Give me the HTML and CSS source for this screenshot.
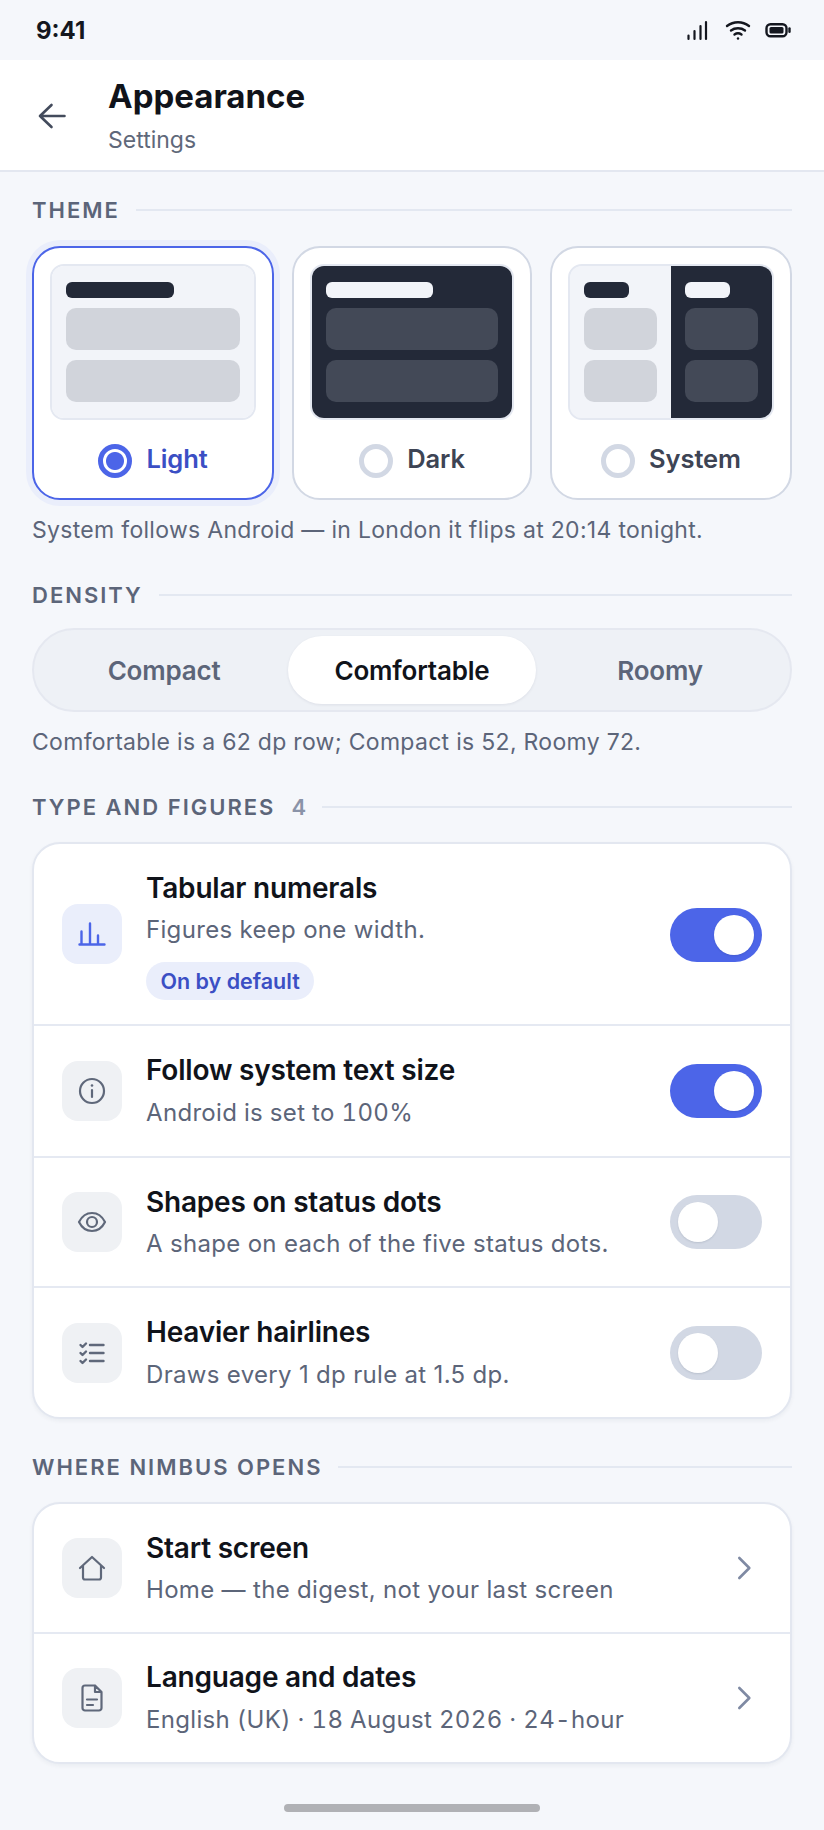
FILE: index.html
```html
<!DOCTYPE html>
<html lang="en">
<head>
    <meta charset="UTF-8">
    <meta name="viewport" content="width=device-width, initial-scale=1.0">
    <title>Appearance</title>
    <link rel="stylesheet" href="styles.css">
</head>
<body>
    <div class="status-bar">
        <span class="clock">9:41</span>
        <div class="status-icons">
            <svg class="signal" width="24" height="24" viewBox="0 0 24 24" fill="none" stroke="#14171f" stroke-width="2.200" stroke-linecap="round"><path d="M3.500 21v-3.500M9.500 21v-8M15.500 21V8M21 21V4"/></svg>
            <svg class="wifi" width="28" height="24" viewBox="0 0 28 24" fill="none" stroke="#14171f" stroke-width="2.400" stroke-linecap="round"><path d="M3 8c6.500-5 15.500-5 22 0M7 12.500c4-3 10-3 14 0M10.500 16.500c2-1.400 5-1.400 7 0"/><circle cx="14" cy="20.500" r="1.200" fill="#14171f" stroke="none"/></svg>
            <svg width="26" height="24" viewBox="0 0 26 24" fill="none"><rect x="1.500" y="6.200" width="20" height="12" rx="4" stroke="#14171f" stroke-width="2.400"/><rect x="4.500" y="9" width="14" height="6.400" rx="1.500" fill="#14171f"/><path d="M24.500 10.500v3.200" stroke="#14171f" stroke-width="2.400" stroke-linecap="round"/></svg>
        </div>
    </div>

    <header class="app-bar">
        <svg class="back" width="32" height="32" viewBox="0 0 32 32" fill="none" stroke="#434b5c" stroke-width="2.600" stroke-linecap="round" stroke-linejoin="round"><path d="M28.500 16H4M15.500 5 4 16l11.500 11"/></svg>
        <div>
            <h1>Appearance</h1>
            <p>Settings</p>
        </div>
    </header>

    <main>
        <div class="section-head"><span>THEME</span></div>
        <div class="themes">
            <div class="theme selected">
                <div class="preview">
                    <div class="pane light"><i class="bar"></i><i class="block"></i><i class="block"></i></div>
                </div>
                <div class="theme-label"><span class="radio"></span><span class="name">Light</span></div>
            </div>
            <div class="theme">
                <div class="preview">
                    <div class="pane dark"><i class="bar"></i><i class="block"></i><i class="block"></i></div>
                </div>
                <div class="theme-label"><span class="radio"></span><span class="name">Dark</span></div>
            </div>
            <div class="theme">
                <div class="preview split">
                    <div class="pane light"><i class="bar"></i><i class="block"></i><i class="block"></i></div>
                    <div class="pane dark"><i class="bar"></i><i class="block"></i><i class="block"></i></div>
                </div>
                <div class="theme-label"><span class="radio"></span><span class="name">System</span></div>
            </div>
        </div>
        <p class="note">System follows Android — in London it flips at 20:14 tonight.</p>

        <div class="section-head density-head"><span>DENSITY</span></div>
        <div class="segments">
            <div class="segment">Compact</div>
            <div class="segment active">Comfortable</div>
            <div class="segment">Roomy</div>
        </div>
        <p class="note">Comfortable is a 62 dp row; Compact is 52, Roomy 72.</p>

        <div class="section-head type-head"><span>TYPE AND FIGURES</span><b>4</b></div>
        <div class="card">
            <div class="row tall">
                <div class="icon accent">
                    <svg width="32" height="32" viewBox="0 0 32 32" fill="none" stroke="#4c65e8" stroke-width="2.400" stroke-linecap="round"><path d="M3.500 26.500h25M5.500 26.500V13.500M14 26.500V5.500M22 26.500V17.500"/></svg>
                </div>
                <div class="text">
                    <div class="title">Tabular numerals</div>
                    <div class="sub">Figures keep one width.</div>
                    <div class="badge">On by default</div>
                </div>
                <div class="toggle on"></div>
            </div>
            <div class="row follow">
                <div class="icon">
                    <svg width="32" height="32" viewBox="0 0 32 32" fill="none" stroke="#5f687a" stroke-width="2.200" stroke-linecap="round"><circle cx="16" cy="16" r="12"/><path d="M16 15v7"/><circle cx="16" cy="10.500" r="1.300" fill="#5f687a" stroke="none"/></svg>
                </div>
                <div class="text">
                    <div class="title">Follow system text size</div>
                    <div class="sub tnum">Android is set to 100%</div>
                </div>
                <div class="toggle on"></div>
            </div>
            <div class="row">
                <div class="icon">
                    <svg width="32" height="32" viewBox="0 0 32 32" fill="none" stroke="#5f687a" stroke-width="2.200" stroke-linecap="round" stroke-linejoin="round"><path d="M3 16c3-6 8-9 13-9s10 3 13 9c-3 6-8 9-13 9S6 22 3 16z"/><circle cx="16" cy="16" r="5"/></svg>
                </div>
                <div class="text">
                    <div class="title">Shapes on status dots</div>
                    <div class="sub">A shape on each of the five status dots.</div>
                </div>
                <div class="toggle"></div>
            </div>
            <div class="row hairlines">
                <div class="icon">
                    <svg width="32" height="32" viewBox="0 0 32 32" fill="none" stroke="#5f687a" stroke-width="2.400" stroke-linecap="round" stroke-linejoin="round"><path d="M14 8h13.500M14 16h13.500M14 24h13.500M4.500 8l2 2 3.500-3.500M4.500 16l2 2 3.500-3.500M4.500 24l2 2 3.500-3.500"/></svg>
                </div>
                <div class="text">
                    <div class="title">Heavier hairlines</div>
                    <div class="sub">Draws every 1 dp rule at 1.5 dp.</div>
                </div>
                <div class="toggle"></div>
            </div>
        </div>

        <div class="section-head opens-head"><span>WHERE NIMBUS OPENS</span></div>
        <div class="card">
            <div class="row">
                <div class="icon">
                    <svg width="32" height="32" viewBox="0 0 32 32" fill="none" stroke="#5f687a" stroke-width="2.200" stroke-linecap="round" stroke-linejoin="round"><path d="M4 16 16 5l12 11M7 13.500v12a2 2 0 0 0 2 2h14a2 2 0 0 0 2-2v-12"/></svg>
                </div>
                <div class="text">
                    <div class="title">Start screen</div>
                    <div class="sub">Home — the digest, not your last screen</div>
                </div>
                <svg class="chevron" width="32" height="32" viewBox="0 0 32 32" fill="none" stroke="#7f8aa3" stroke-width="2.600" stroke-linecap="round" stroke-linejoin="round"><path d="M9.300 6l10 10-10 10"/></svg>
            </div>
            <div class="row">
                <div class="icon">
                    <svg width="32" height="32" viewBox="0 0 32 32" fill="none" stroke="#5f687a" stroke-width="2.200" stroke-linecap="round" stroke-linejoin="round"><path d="M19 3.500H9a2.500 2.500 0 0 0-2.500 2.500v20A2.500 2.500 0 0 0 9 28.500h14a2.500 2.500 0 0 0 2.500-2.500V10L19 3.500V10h6.500M11 17.500h10M11 23h6"/></svg>
                </div>
                <div class="text">
                    <div class="title">Language and dates</div>
                    <div class="sub tnum">English (UK) · 18 August 2026 · 24-hour</div>
                </div>
                <svg class="chevron" width="32" height="32" viewBox="0 0 32 32" fill="none" stroke="#7f8aa3" stroke-width="2.600" stroke-linecap="round" stroke-linejoin="round"><path d="M9.300 6l10 10-10 10"/></svg>
            </div>
        </div>
        <div class="home-indicator"></div>
    </main>
</body>
</html>
```

FILE: styles.css
```css
* {
    box-sizing: border-box;
}
body {
    margin: 0;
    font-family: Inter, "Liberation Sans", sans-serif;
    background-color: #f5f7fb;
    color: #10131a;
    height: 1830px;
    overflow: hidden;
}
p, h1 {
    margin: 0;
}

.status-bar {
    height: 60px;
    padding: 0 33px 0 36px;
    display: flex;
    align-items: center;
    justify-content: space-between;
}
.clock {
    font-size: 24px;
    font-weight: 700;
    color: #14171f;
}
.status-icons {
    display: flex;
    align-items: center;
    gap: 13px;
}
.signal {
    margin-right: 2px;
}

.app-bar {
    height: 112px;
    background: #fff;
    border-bottom: 2px solid #e3e7f0;
    display: flex;
    align-items: center;
    gap: 40px;
    padding-left: 36px;
}
.back {
    margin-top: 2px;
}
.app-bar h1 {
    font-size: 33px;
    line-height: 42px;
    font-weight: 700;
}
.app-bar p {
    font-size: 23px;
    line-height: 30px;
    margin-top: 8px;
    color: #5f687a;
}

main {
    padding: 24px 32px 0;
}
.section-head {
    display: flex;
    align-items: center;
    gap: 16px;
    height: 28px;
    font-size: 22px;
    font-weight: 600;
    letter-spacing: 2px;
    color: #5c6579;
}
.section-head::after {
    content: "";
    flex: 1;
    height: 2px;
    background: #e3e8f1;
}
.section-head b {
    font-weight: 600;
    letter-spacing: 0;
    color: #8a93a8;
}

.themes {
    display: grid;
    grid-template-columns: 242px 240px 242px;
    gap: 18px;
    margin-top: 22px;
}
.theme {
    height: 254px;
    background: #fff;
    border: 2px solid #d2d8e4;
    border-radius: 28px;
    padding: 16px;
}
.theme.selected {
    border-color: #4c65e8;
    box-shadow: 0 0 0 6px #eaeefb;
}
.preview {
    height: 156px;
    border: 2px solid #e4e8f1;
    border-radius: 14px;
    overflow: hidden;
    background: #f2f4f9;
    display: grid;
    grid-template-columns: 1fr;
}
.preview.split {
    grid-template-columns: 1fr 1fr;
}
.pane {
    padding: 16px 14px;
    display: flex;
    flex-direction: column;
    gap: 10px;
}
.pane.light {
    background: #f2f4f9;
}
.pane.dark {
    background: #232938;
}
.pane i {
    display: block;
}
.bar {
    width: 62%;
    height: 16px;
    border-radius: 6px;
}
.block {
    height: 42px;
    border-radius: 10px;
}
.light .bar {
    background: #232938;
}
.light .block {
    background: #d1d4db;
}
.dark .bar {
    background: #f2f4f9;
}
.dark .block {
    background: #434957;
}
.theme-label {
    margin-top: 22px;
    display: flex;
    align-items: center;
    justify-content: center;
    gap: 14px;
    font-size: 25.500px;
    letter-spacing: -0.1px;
    line-height: 34px;
    font-weight: 600;
    color: #3d4454;
}
.name {
    margin-bottom: 4px;
}
.radio {
    width: 34px;
    height: 34px;
    border-radius: 50%;
    border: 5px solid #d2d8e4;
    background: #fff;
}
.selected .theme-label {
    color: #3b4fc4;
}
.selected .radio {
    border-color: #4c65e8;
    background: radial-gradient(circle, #4c65e8 0 8.500px, #fff 9.500px);
}

.note {
    font-size: 23px;
    letter-spacing: 0.3px;
    line-height: 34px;
    color: #5c6579;
    margin-top: 13px;
}
.density-head {
    margin-top: 34px;
}
.segments {
    margin-top: 19px;
    height: 84px;
    padding: 6px;
    border: 2px solid #e5e8f0;
    border-radius: 42px;
    background: #eef1f6;
    display: grid;
    grid-template-columns: repeat(3, 1fr);
}
.segment {
    border-radius: 34px;
    display: flex;
    align-items: center;
    justify-content: center;
    font-size: 26px;
    letter-spacing: -0.2px;
    font-weight: 600;
    color: #5c6579;
}
.segment.active {
    background: #fff;
    color: #10131a;
    box-shadow: 0 1px 3px rgba(20, 30, 60, 0.08);
}
.type-head {
    margin-top: 34px;
}
.opens-head {
    margin-top: 34px;
}

.card {
    margin-top: 21px;
    background: #fff;
    border: 2px solid #e3e7f0;
    border-radius: 28px;
    box-shadow: 0 2px 4px rgba(20, 30, 60, 0.05);
}
.row {
    height: 130px;
    display: flex;
    align-items: center;
    gap: 24px;
    padding: 0 28px;
    border-bottom: 2px solid #e5e9f2;
}
.row:last-child {
    height: 128px;
    border-bottom: none;
}
.row.tall {
    height: 182px;
}
.tall .text, .tall .toggle {
    margin-top: 2px;
}
.row.follow {
    height: 132px;
}
.row.hairlines {
    height: 129px;
}
.icon {
    width: 60px;
    height: 60px;
    flex: none;
    border-radius: 16px;
    background: #eff1f4;
    display: flex;
    align-items: center;
    justify-content: center;
}
.icon.accent {
    background: #eaeefb;
}
.text {
    flex: 1;
}
.title {
    font-size: 28px;
    letter-spacing: -0.2px;
    line-height: 36px;
    font-weight: 600;
    color: #10131a;
}
.sub {
    font-size: 24px;
    letter-spacing: 0.32px;
    line-height: 34px;
    margin-top: 7px;
    color: #5c6579;
}
.follow .sub, .hairlines .sub, .sub.tnum {
    margin-top: 8px;
}
.sub.tnum {
    font-variant-numeric: tabular-nums;
}
.badge {
    display: inline-block;
    margin-top: 15px;
    padding: 0 14.500px;
    height: 38px;
    line-height: 38px;
    border-radius: 19px;
    background: #eaeefb;
    font-size: 21.500px;
    font-weight: 600;
    color: #3b4fc4;
}
.toggle {
    position: relative;
    width: 92px;
    height: 54px;
    flex: none;
    border-radius: 27px;
    background: #d2d8e4;
}
.toggle::after {
    content: "";
    position: absolute;
    top: 7px;
    left: 8px;
    width: 40px;
    height: 40px;
    border-radius: 50%;
    background: #fff;
    box-shadow: 0 1px 2px rgba(20, 30, 60, 0.12);
}
.toggle.on {
    background: #4c65e8;
}
.toggle.on::after {
    left: 44px;
}
.chevron {
    flex: none;
}
.home-indicator {
    width: 256px;
    height: 8px;
    border-radius: 4px;
    background: #b0b1b5;
    margin: 40px auto 0;
}
```
